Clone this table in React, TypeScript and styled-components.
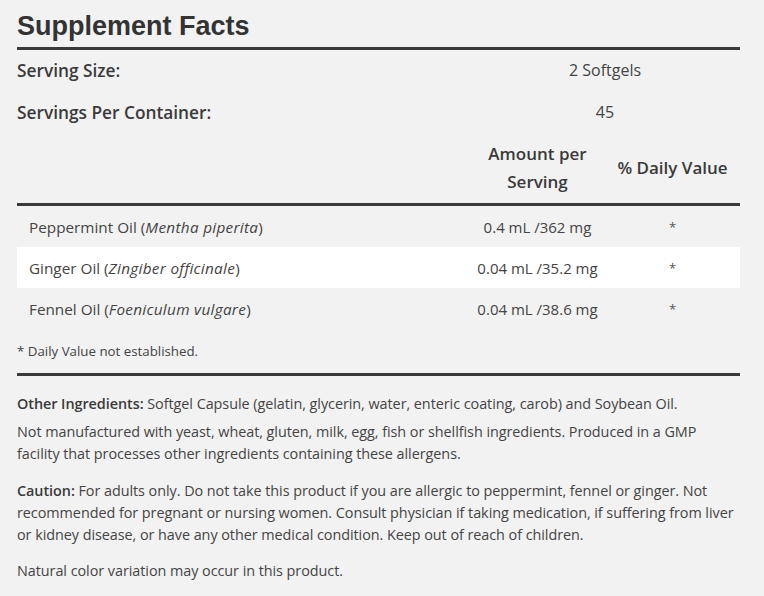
import styled, { createGlobalStyle } from "styled-components";

const GlobalStyle = createGlobalStyle`
  html, body {
    margin: 0;
    padding: 0;
    background: #f2f2f2;
  }
  body {
    font-family: "Open Sans", "Noto Sans", sans-serif;
    color: #444;
  }
`;

const Page = styled.div`
  width: 723px;
  padding: 11px 0 0 17px;
`;

const Title = styled.h1`
  font-family: "Liberation Sans", Arial, sans-serif;
  font-size: 27px;
  font-weight: 700;
  color: #333;
  margin: 0;
  padding-bottom: 5px;
  border-bottom: 3px solid #3a3a3a;
`;

const InfoList = styled.div`
  display: flex;
  flex-direction: column;
  gap: 2px;
`;

const InfoRow = styled.div`
  display: grid;
  grid-template-columns: 453px 270px;
  align-items: center;
  height: 40px;
`;

const InfoLabel = styled.div`
  font-size: 17.3px;
  font-weight: 600;
  color: #3a3a3a;
`;

const InfoValue = styled.div`
  font-size: 16px;
  text-align: center;
  color: #444;
`;

const Table = styled.div`
  display: flex;
  flex-direction: column;
`;

const HeadRow = styled.div`
  display: grid;
  grid-template-columns: 453px 135px 135px;
  align-items: center;
  height: 71px;
  border-bottom: 3px solid #3a3a3a;
`;

const HeadCell = styled.div`
  font-size: 17px;
  font-weight: 600;
  color: #3a3a3a;
  text-align: center;
  line-height: 28px;
`;

const Row = styled.div<{ $light?: boolean }>`
  display: grid;
  grid-template-columns: 453px 135px 135px;
  align-items: center;
  height: 41px;
  background: ${({ $light }) => ($light ? "#ffffff" : "transparent")};
`;

const NameCell = styled.div`
  padding-left: 12px;
  font-size: 15.3px;
  color: #444;

  i {
    letter-spacing: 0.3px;
  }
`;

const Cell = styled.div`
  text-align: center;
  font-size: 15px;
  color: #444;
`;

const Star = styled(Cell)`
  font-size: 13px;
  color: #555;
`;

const Footnote = styled.div`
  font-size: 13.3px;
  color: #444;
  padding: 13px 0 13px;
  border-bottom: 3px solid #3a3a3a;
`;

const Para = styled.p<{ $gap?: number }>`
  margin: ${({ $gap }) => $gap ?? 0}px 0 0;
  font-size: 14.4px;
  line-height: 22px;
  letter-spacing: -0.05px;
  color: #444;
`;

const Bold = styled.b`
  font-weight: 600;
  color: #3a3a3a;
`;

const rows = [
  { name: "Peppermint Oil", latin: "Mentha piperita", amount: "0.4 mL /362 mg" },
  { name: "Ginger Oil", latin: "Zingiber officinale", amount: "0.04 mL /35.2 mg" },
  { name: "Fennel Oil", latin: "Foeniculum vulgare", amount: "0.04 mL /38.6 mg" },
];

export default function App() {
  return (
    <>
      <GlobalStyle />
      <Page>
        <Title>Supplement Facts</Title>
        <InfoList>
          <InfoRow>
            <InfoLabel>Serving Size:</InfoLabel>
            <InfoValue>2 Softgels</InfoValue>
          </InfoRow>
          <InfoRow>
            <InfoLabel>Servings Per Container:</InfoLabel>
            <InfoValue>45</InfoValue>
          </InfoRow>
        </InfoList>
        <Table>
          <HeadRow>
            <div />
            <HeadCell>
              Amount per
              <br />
              Serving
            </HeadCell>
            <HeadCell>% Daily Value</HeadCell>
          </HeadRow>
          {rows.map((r, i) => (
            <Row key={r.name} $light={i === 1}>
              <NameCell>
                {r.name} (<i>{r.latin}</i>)
              </NameCell>
              <Cell>{r.amount}</Cell>
              <Star>*</Star>
            </Row>
          ))}
        </Table>
        <Footnote>* Daily Value not established.</Footnote>
        <Para $gap={17}>
          <Bold>Other Ingredients:</Bold> Softgel Capsule (gelatin, glycerin, water, enteric coating, carob) and
          Soybean Oil.
        </Para>
        <Para $gap={6}>
          Not manufactured with yeast, wheat, gluten, milk, egg, fish or shellfish ingredients. Produced in a GMP
          facility that processes other ingredients containing these allergens.
        </Para>
        <Para $gap={15}>
          <Bold>Caution:</Bold> For adults only. Do not take this product if you are allergic to peppermint, fennel
          or ginger. Not recommended for pregnant or nursing women. Consult physician if taking medication, if
          suffering from liver or kidney disease, or have any other medical condition. Keep out of reach of children.
        </Para>
        <Para $gap={14}>Natural color variation may occur in this product.</Para>
      </Page>
    </>
  );
}
